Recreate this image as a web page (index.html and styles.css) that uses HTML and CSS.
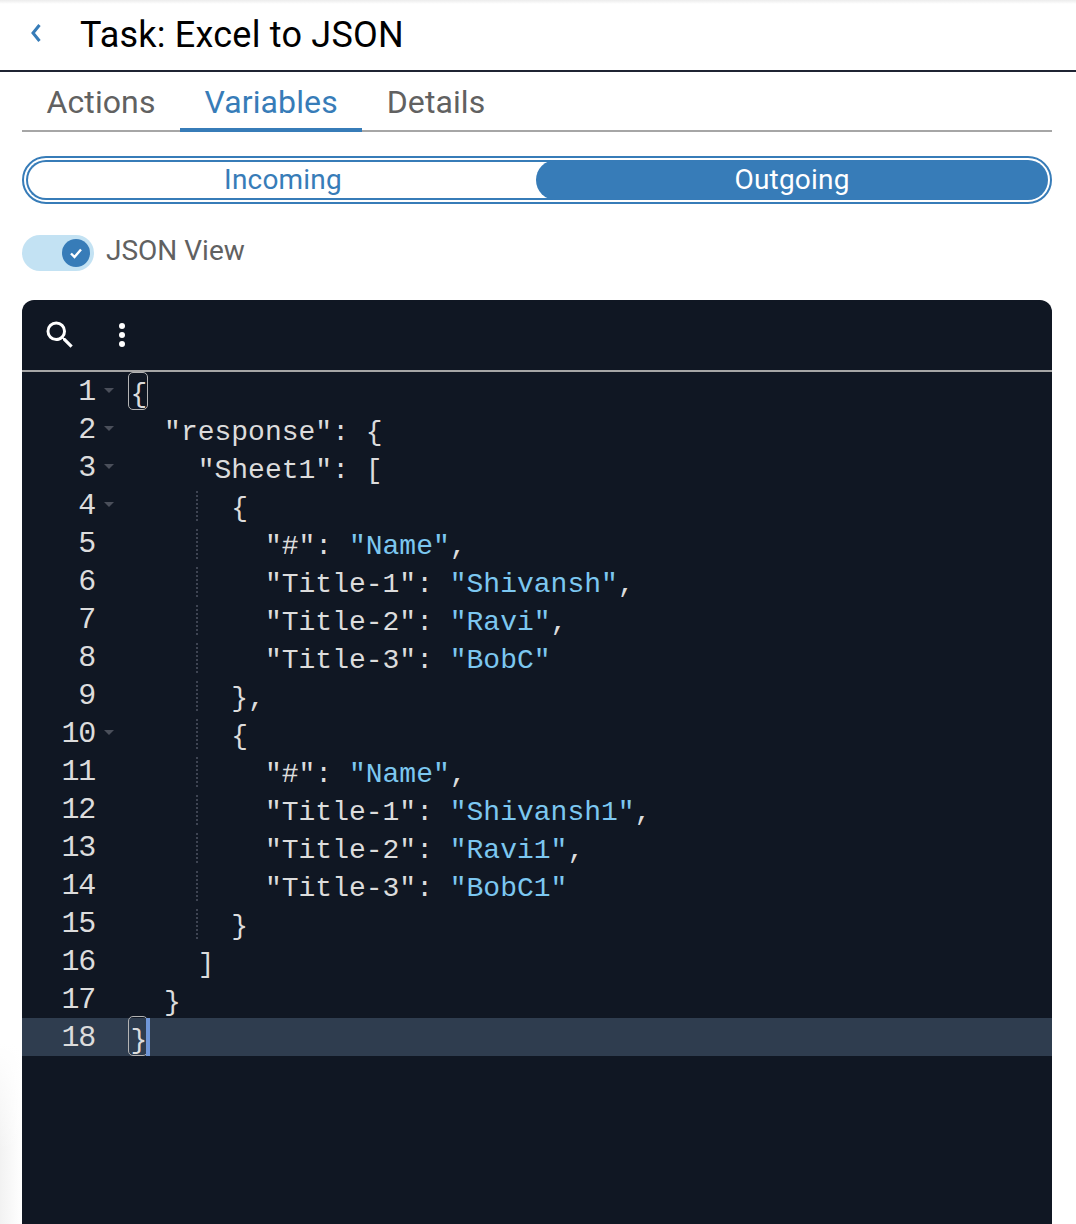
FILE: index.html
```html
<!DOCTYPE html>
<html lang="en">
<head>
<meta charset="utf-8">
<title>Task: Excel to JSON</title>
<link rel="stylesheet" href="styles.css">
</head>
<body>
<div class="shade-top"></div>
<div class="shade-left"></div>
<header class="header">
  <svg class="back" width="12" height="20" viewBox="0 0 12 20"><path d="M9.500 2 3 10l6.500 8" fill="none" stroke="#377cb8" stroke-width="3"/></svg>
  <h1 class="title">Task: Excel to JSON</h1>
</header>
<main class="content">
  <nav class="tabs">
    <a class="tab">Actions</a>
    <a class="tab tab-active">Variables</a>
    <a class="tab">Details</a>
  </nav>
  <div class="segments">
    <div class="seg seg-in">Incoming</div>
    <div class="seg seg-out">Outgoing</div>
  </div>
  <div class="switch-row">
    <span class="switch">
      <span class="knob">
        <svg width="14" height="12" viewBox="0 0 14 12"><path d="M2 6.500 5.500 10 12 2.500" fill="none" stroke="#fff" stroke-width="2.400"/></svg>
      </span>
    </span>
    <span class="switch-label">JSON View</span>
  </div>
  <section class="editor">
    <div class="toolbar">
      <svg class="tool" width="36" height="36" viewBox="0 0 24 24"><path fill="#fff" d="M15.500 14h-.790l-.280-.270A6.470 6.470 0 0 0 16 9.500 6.500 6.500 0 1 0 9.500 16c1.610 0 3.090-.590 4.230-1.570l.270.280v.790l5 4.990L20.490 19l-4.990-5zm-6 0C7.010 14 5 11.990 5 9.500S7.010 5 9.500 5 14 7.010 14 9.500 11.990 14 9.500 14z"/></svg>
      <svg class="tool tool-more" width="8" height="26" viewBox="0 0 8 26"><circle cx="4" cy="4" r="3" fill="#fff"/><circle cx="4" cy="13" r="3" fill="#fff"/><circle cx="4" cy="22" r="3" fill="#fff"/></svg>
    </div>
    <div class="code">
      <div class="row"><span class="num">1</span><span class="fold"></span><span class="line"><span class="match match-first">{</span></span></div>
      <div class="row"><span class="num">2</span><span class="fold"></span><span class="line">  "response": {</span></div>
      <div class="row"><span class="num">3</span><span class="fold"></span><span class="line">    "Sheet1": [</span></div>
      <div class="row"><span class="num">4</span><span class="fold"></span><span class="line guide">      {</span></div>
      <div class="row"><span class="num">5</span><span class="nofold"></span><span class="line guide">        "#": <span class="str">"Name"</span>,</span></div>
      <div class="row"><span class="num">6</span><span class="nofold"></span><span class="line guide">        "Title-1": <span class="str">"Shivansh"</span>,</span></div>
      <div class="row"><span class="num">7</span><span class="nofold"></span><span class="line guide">        "Title-2": <span class="str">"Ravi"</span>,</span></div>
      <div class="row"><span class="num">8</span><span class="nofold"></span><span class="line guide">        "Title-3": <span class="str">"BobC"</span></span></div>
      <div class="row"><span class="num">9</span><span class="nofold"></span><span class="line guide">      },</span></div>
      <div class="row"><span class="num">10</span><span class="fold"></span><span class="line guide">      {</span></div>
      <div class="row"><span class="num">11</span><span class="nofold"></span><span class="line guide">        "#": <span class="str">"Name"</span>,</span></div>
      <div class="row"><span class="num">12</span><span class="nofold"></span><span class="line guide">        "Title-1": <span class="str">"Shivansh1"</span>,</span></div>
      <div class="row"><span class="num">13</span><span class="nofold"></span><span class="line guide">        "Title-2": <span class="str">"Ravi1"</span>,</span></div>
      <div class="row"><span class="num">14</span><span class="nofold"></span><span class="line guide">        "Title-3": <span class="str">"BobC1"</span></span></div>
      <div class="row"><span class="num">15</span><span class="nofold"></span><span class="line guide">      }</span></div>
      <div class="row"><span class="num">16</span><span class="nofold"></span><span class="line">    ]</span></div>
      <div class="row"><span class="num">17</span><span class="nofold"></span><span class="line">  }</span></div>
      <div class="row row-active"><span class="num">18</span><span class="nofold"></span><span class="line"><span class="match">}</span><span class="cursor"></span></span></div>
    </div>
  </section>
</main>
</body>
</html>
```
FILE: styles.css
```css
* { box-sizing: border-box; }
html, body { margin: 0; padding: 0; height: 100%; overflow: hidden; background: #fff; }
body { font-family: Roboto, sans-serif; position: relative; }
.shade-top { position: absolute; top: 0; left: 0; right: 0; height: 4px; background: linear-gradient(#ececec, #fff); }
.shade-left { position: absolute; left: 0; bottom: 0; width: 22px; height: 180px; background: linear-gradient(#fff, rgba(255,255,255,0) 60%), linear-gradient(90deg, #f2f2f2, #fff); }
.header { position: relative; height: 72px; border-bottom: 2px solid #1f2433; display: flex; align-items: center; padding: 0 0 0 30px; }
.back { flex: none; margin-bottom: 4px; }
.title { margin: 0 0 0 38px; font-size: 36px; font-weight: 400; letter-spacing: .22px; color: #000; line-height: 44px; }
.content { position: relative; padding: 0 24px 0 22px; }
.tabs { display: flex; height: 60px; border-bottom: 2px solid #a6a6a6; }
.tab { padding: 8px 24.500px 0; font-size: 32px; letter-spacing: .1px; line-height: 44px; color: #616161; height: 60px; }
.tab-active { color: #377cb8; border-bottom: 4px solid #377cb8; }
.segments { margin-top: 24px; height: 48px; display: flex; border: 2px solid #377cb8; border-radius: 24px; padding: 2px; }
.seg { height: 40px; font-size: 28px; letter-spacing: .2px; text-align: center; }
.seg-in { flex: 0 0 530px; color: #377cb8; line-height: 36px; border: 2px solid #377cb8; border-right: 0; border-radius: 20px 0 0 20px; padding-right: 18px; }
.seg-out { flex: 1; margin-left: -20px; color: #fff; line-height: 40px; background: #377cb8; border-radius: 20px; position: relative; }
.switch-row { display: flex; align-items: center; margin-top: 30px; height: 38px; }
.switch { width: 72px; height: 36px; border-radius: 18px; background: #c3e2f3; display: flex; align-items: center; justify-content: flex-end; padding-right: 4px; }
.knob { width: 28px; height: 28px; border-radius: 50%; background: #377cb8; display: flex; align-items: center; justify-content: center; }
.switch-label { margin-left: 12px; margin-bottom: 4px; font-size: 28px; color: #616161; line-height: 36px; }
.editor { margin-top: 28px; height: 940px; background: #101723; border-radius: 12px 12px 0 0; color: #dcdcdc; }
.toolbar { height: 72px; border-bottom: 2px solid #a6a6a6; display: flex; align-items: center; padding: 0 0 0 19.500px; }
.tool { flex: none; }
.tool-more { margin-left: 40.500px; }
.code { font-family: "Liberation Mono", monospace; font-size: 28px; }
.row { height: 38px; display: flex; align-items: flex-start; }
.row-active { background: #2f3d4f; }
.num { width: 73px; text-align: right; font-size: 30px; letter-spacing: -1.200px; line-height: 38px; margin-top: 1px; color: #dcdcdc; flex: none; }
.fold { width: 35.500px; flex: none; position: relative; }
.fold::after { content: ""; position: absolute; left: 9px; top: 16px; border-left: 5px solid transparent; border-right: 5px solid transparent; border-top: 5px solid #4a4f5a; }
.nofold { width: 35.500px; flex: none; }
.line { white-space: pre; line-height: 38px; margin-top: 4px; position: relative; height: 34px; }
.guide::before { content: ""; position: absolute; left: 65.500px; top: 1px; height: 31px; width: 2px; background: repeating-linear-gradient(#3e4452 0 2px, transparent 2px 4px); }
.str { color: #7cc7f0; }
.match { position: relative; }
.match::before { content: ""; position: absolute; left: -2.500px; top: -9px; width: 18px; height: 38px; border: 1.500px solid #b4b4b4; border-radius: 5px; }
.match-first::before { top: -7px; height: 36px; }
.cursor { position: absolute; left: 15.500px; top: -4px; width: 4px; height: 38px; background: #7097d8; }
```
